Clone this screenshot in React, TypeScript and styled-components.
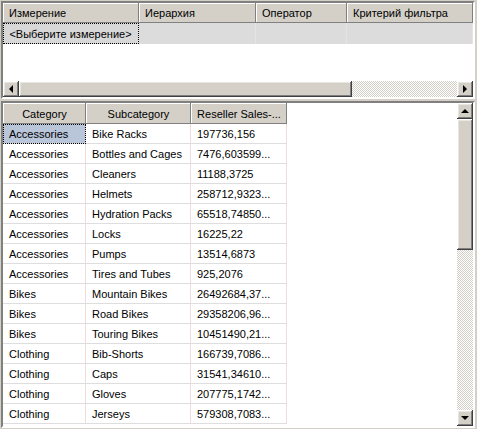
import React from "react";
import styled, { createGlobalStyle, css } from "styled-components";

const Global = createGlobalStyle`
  html, body { margin: 0; padding: 0; background: #d4d0c8; }
  body { font-family: "Liberation Sans", Arial, sans-serif; font-size: 11px; color: #000; }
`;

const raised = css`
  background: #d4d0c8;
  box-shadow: inset -1px -1px #404040, inset 1px 1px #ffffff, inset -2px -2px #808080, inset 2px 2px #e8e6e1;
`;

const Window = styled.div`
  width: 477px;
  height: 429px;
  box-sizing: border-box;
  padding: 1px 2px 2px 1px;
  display: flex;
  flex-direction: column;
  gap: 2px;
  background: #d4d0c8;
  overflow: hidden;
`;

const Sunken = styled.div<{ $h: number }>`
  height: ${(p) => p.$h}px;
  box-sizing: border-box;
  border-style: solid;
  border-width: 2px;
  border-color: #808080 #ffffff #ffffff #808080;
  display: flex;
  overflow: hidden;
  flex-shrink: 0;
  position: relative;
  &::after {
    content: "";
    position: absolute;
    inset: 0;
    pointer-events: none;
    box-shadow: inset 1px 1px #404040;
    margin: -1px;
  }
`;

const TopInner = styled.div`
  flex: 1;
  display: flex;
  flex-direction: column;
  background: #fff;
  min-width: 0;
`;

const TopHeader = styled.div`
  display: grid;
  grid-template-columns: 136px 117px 91px 1fr;
  height: 20px;
  flex-shrink: 0;
`;

const HeadCell = styled.div<{ $center?: boolean }>`
  background: #d4d0c8;
  box-shadow: inset -1px -1px #808080, inset 1px 1px #ffffff;
  display: flex;
  align-items: center;
  justify-content: ${(p) => (p.$center ? "center" : "flex-start")};
  padding: 0 ${(p) => (p.$center ? 0 : 6)}px;
  white-space: nowrap;
  overflow: hidden;
`;

const FilterRow = styled.div`
  display: grid;
  grid-template-columns: 136px 117px 91px 1fr;
  height: 21px;
  flex-shrink: 0;
  background: #dcdcdc;
`;

const FilterCell = styled.div<{ $focus?: boolean }>`
  display: flex;
  align-items: center;
  justify-content: center;
  border-right: 1px solid #e4e4e4;
  ${(p) =>
    p.$focus &&
    css`
      outline: 1px dotted #000;
      outline-offset: -1px;
      background: #d8d8d8;
    `}
`;

const Blank = styled.div`
  flex: 1;
  background: #fff;
`;

const HScroll = styled.div`
  height: 16px;
  display: flex;
  flex-shrink: 0;
`;

const ArrowBtn = styled.div`
  ${raised};
  width: 16px;
  height: 16px;
  flex-shrink: 0;
  display: flex;
  align-items: center;
  justify-content: center;
`;

const Tri = styled.span<{ $dir: "l" | "r" | "u" | "d" }>`
  width: 0;
  height: 0;
  ${(p) =>
    p.$dir === "l"
      ? css`border-top: 4px solid transparent; border-bottom: 4px solid transparent; border-right: 4px solid #000;`
      : p.$dir === "r"
      ? css`border-top: 4px solid transparent; border-bottom: 4px solid transparent; border-left: 4px solid #000;`
      : p.$dir === "u"
      ? css`border-left: 4px solid transparent; border-right: 4px solid transparent; border-bottom: 4px solid #000;`
      : css`border-left: 4px solid transparent; border-right: 4px solid transparent; border-top: 4px solid #000;`}
`;

const Thumb = styled.div<{ $size: number }>`
  ${raised};
  flex: 0 0 ${(p) => p.$size}px;
`;

const Track = styled.div`
  flex: 1;
  background-color: #ffffff;
  background-image: repeating-conic-gradient(#d4d0c8 0 25%, #ffffff 0 50%);
  background-size: 2px 2px;
`;

const BottomInner = styled.div`
  flex: 1;
  display: flex;
  background: #fff;
  min-width: 0;
`;

const Grid = styled.div`
  flex: 1;
  display: flex;
  flex-direction: column;
  overflow: hidden;
`;

const GridRow = styled.div<{ $head?: boolean }>`
  display: grid;
  grid-template-columns: 83px 105px 96px;
  height: ${(p) => (p.$head ? 21 : 20)}px;
  flex-shrink: 0;
`;

const Cell = styled.div<{ $sel?: boolean }>`
  display: flex;
  align-items: center;
  padding-left: 6px;
  border-right: 1px solid #ecdcdc;
  border-bottom: 1px solid #dedede;
  white-space: nowrap;
  overflow: hidden;
  ${(p) =>
    p.$sel &&
    css`
      background: #b9c5d8;
      outline: 1px dotted #000;
      outline-offset: -1px;
    `}
`;

const VScroll = styled.div`
  width: 16px;
  display: flex;
  flex-direction: column;
  flex-shrink: 0;
`;

const rows: [string, string, string][] = [
  ["Accessories", "Bike Racks", "197736,156"],
  ["Accessories", "Bottles and Cages", "7476,603599..."],
  ["Accessories", "Cleaners", "11188,3725"],
  ["Accessories", "Helmets", "258712,9323..."],
  ["Accessories", "Hydration Packs", "65518,74850..."],
  ["Accessories", "Locks", "16225,22"],
  ["Accessories", "Pumps", "13514,6873"],
  ["Accessories", "Tires and Tubes", "925,2076"],
  ["Bikes", "Mountain Bikes", "26492684,37..."],
  ["Bikes", "Road Bikes", "29358206,96..."],
  ["Bikes", "Touring Bikes", "10451490,21..."],
  ["Clothing", "Bib-Shorts", "166739,7086..."],
  ["Clothing", "Caps", "31541,34610..."],
  ["Clothing", "Gloves", "207775,1742..."],
  ["Clothing", "Jerseys", "579308,7083..."],
];

export default function App() {
  return (
    <>
      <Global />
      <Window>
        <Sunken $h={98}>
          <TopInner>
            <TopHeader>
              <HeadCell>Измерение</HeadCell>
              <HeadCell>Иерархия</HeadCell>
              <HeadCell>Оператор</HeadCell>
              <HeadCell>Критерий фильтра</HeadCell>
            </TopHeader>
            <FilterRow>
              <FilterCell $focus>&lt;Выберите измерение&gt;</FilterCell>
              <FilterCell />
              <FilterCell />
              <FilterCell />
            </FilterRow>
            <Blank />
            <HScroll>
              <ArrowBtn>
                <Tri $dir="l" />
              </ArrowBtn>
              <Thumb $size={333} />
              <Track />
              <ArrowBtn>
                <Tri $dir="r" />
              </ArrowBtn>
            </HScroll>
          </TopInner>
        </Sunken>
        <Sunken $h={327}>
          <BottomInner>
            <Grid>
              <GridRow $head>
                <HeadCell $center>Category</HeadCell>
                <HeadCell $center>Subcategory</HeadCell>
                <HeadCell $center>Reseller Sales-...</HeadCell>
              </GridRow>
              {rows.map((r, i) => (
                <GridRow key={i}>
                  <Cell $sel={i === 0}>{r[0]}</Cell>
                  <Cell>{r[1]}</Cell>
                  <Cell>{r[2]}</Cell>
                </GridRow>
              ))}
            </Grid>
            <VScroll>
              <ArrowBtn>
                <Tri $dir="u" />
              </ArrowBtn>
              <Thumb $size={131} />
              <Track />
              <ArrowBtn>
                <Tri $dir="d" />
              </ArrowBtn>
            </VScroll>
          </BottomInner>
        </Sunken>
      </Window>
    </>
  );
}
